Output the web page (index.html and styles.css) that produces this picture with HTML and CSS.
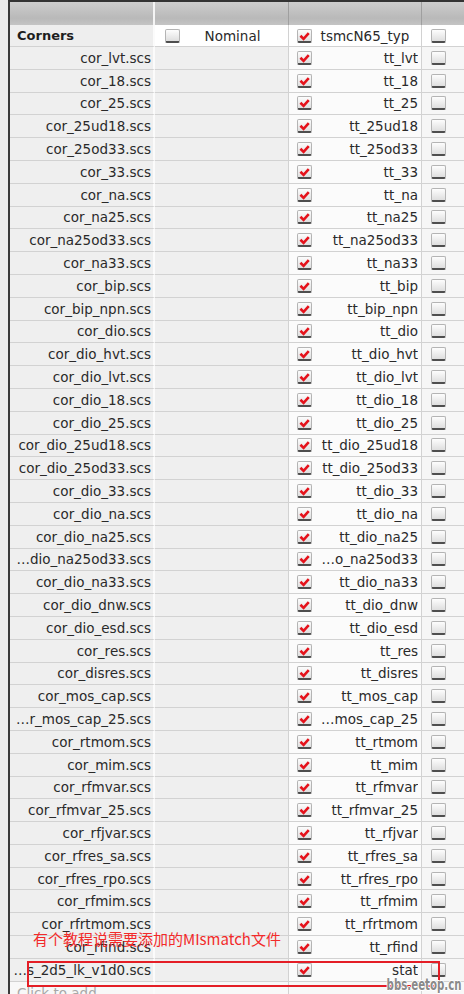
FILE: index.html
```html
<!DOCTYPE html>
<html>
<head>
<meta charset="utf-8">
<link rel="stylesheet" href="styles.css">
</head>
<body>
<div class="frame">
  <div class="table">
    <div class="row hdr">
      <div class="c c1"></div><div class="c c2"></div><div class="c c3"></div><div class="c c4"></div>
    </div>
    <div class="row top">
      <div class="c c1"><span class="title">Corners</span></div>
      <div class="c c2"><span class="cb"></span><span class="lbl center">Nominal</span></div>
      <div class="c c3"><span class="cb on"><svg viewBox="0 0 14 13"><path d="M2.6 6.2 L6 9.6 L11.6 3.4"/></svg></span><span class="lbl center">tsmcN65_typ</span></div>
      <div class="c c4"><span class="cb"></span></div>
    </div>
    <div class="row"><div class="c c1">cor_lvt.scs</div><div class="c c2"></div><div class="c c3"><span class="cb on"><svg viewBox="0 0 14 13"><path d="M2.6 6.2 L6 9.6 L11.6 3.4"/></svg></span><span class="lbl">tt_lvt</span></div><div class="c c4"><span class="cb"></span></div></div>
    <div class="row"><div class="c c1">cor_18.scs</div><div class="c c2"></div><div class="c c3"><span class="cb on"><svg viewBox="0 0 14 13"><path d="M2.6 6.2 L6 9.6 L11.6 3.4"/></svg></span><span class="lbl">tt_18</span></div><div class="c c4"><span class="cb"></span></div></div>
    <div class="row"><div class="c c1">cor_25.scs</div><div class="c c2"></div><div class="c c3"><span class="cb on"><svg viewBox="0 0 14 13"><path d="M2.6 6.2 L6 9.6 L11.6 3.4"/></svg></span><span class="lbl">tt_25</span></div><div class="c c4"><span class="cb"></span></div></div>
    <div class="row"><div class="c c1">cor_25ud18.scs</div><div class="c c2"></div><div class="c c3"><span class="cb on"><svg viewBox="0 0 14 13"><path d="M2.6 6.2 L6 9.6 L11.6 3.4"/></svg></span><span class="lbl">tt_25ud18</span></div><div class="c c4"><span class="cb"></span></div></div>
    <div class="row"><div class="c c1">cor_25od33.scs</div><div class="c c2"></div><div class="c c3"><span class="cb on"><svg viewBox="0 0 14 13"><path d="M2.6 6.2 L6 9.6 L11.6 3.4"/></svg></span><span class="lbl">tt_25od33</span></div><div class="c c4"><span class="cb"></span></div></div>
    <div class="row"><div class="c c1">cor_33.scs</div><div class="c c2"></div><div class="c c3"><span class="cb on"><svg viewBox="0 0 14 13"><path d="M2.6 6.2 L6 9.6 L11.6 3.4"/></svg></span><span class="lbl">tt_33</span></div><div class="c c4"><span class="cb"></span></div></div>
    <div class="row"><div class="c c1">cor_na.scs</div><div class="c c2"></div><div class="c c3"><span class="cb on"><svg viewBox="0 0 14 13"><path d="M2.6 6.2 L6 9.6 L11.6 3.4"/></svg></span><span class="lbl">tt_na</span></div><div class="c c4"><span class="cb"></span></div></div>
    <div class="row"><div class="c c1">cor_na25.scs</div><div class="c c2"></div><div class="c c3"><span class="cb on"><svg viewBox="0 0 14 13"><path d="M2.6 6.2 L6 9.6 L11.6 3.4"/></svg></span><span class="lbl">tt_na25</span></div><div class="c c4"><span class="cb"></span></div></div>
    <div class="row"><div class="c c1">cor_na25od33.scs</div><div class="c c2"></div><div class="c c3"><span class="cb on"><svg viewBox="0 0 14 13"><path d="M2.6 6.2 L6 9.6 L11.6 3.4"/></svg></span><span class="lbl">tt_na25od33</span></div><div class="c c4"><span class="cb"></span></div></div>
    <div class="row"><div class="c c1">cor_na33.scs</div><div class="c c2"></div><div class="c c3"><span class="cb on"><svg viewBox="0 0 14 13"><path d="M2.6 6.2 L6 9.6 L11.6 3.4"/></svg></span><span class="lbl">tt_na33</span></div><div class="c c4"><span class="cb"></span></div></div>
    <div class="row"><div class="c c1">cor_bip.scs</div><div class="c c2"></div><div class="c c3"><span class="cb on"><svg viewBox="0 0 14 13"><path d="M2.6 6.2 L6 9.6 L11.6 3.4"/></svg></span><span class="lbl">tt_bip</span></div><div class="c c4"><span class="cb"></span></div></div>
    <div class="row"><div class="c c1">cor_bip_npn.scs</div><div class="c c2"></div><div class="c c3"><span class="cb on"><svg viewBox="0 0 14 13"><path d="M2.6 6.2 L6 9.6 L11.6 3.4"/></svg></span><span class="lbl">tt_bip_npn</span></div><div class="c c4"><span class="cb"></span></div></div>
    <div class="row"><div class="c c1">cor_dio.scs</div><div class="c c2"></div><div class="c c3"><span class="cb on"><svg viewBox="0 0 14 13"><path d="M2.6 6.2 L6 9.6 L11.6 3.4"/></svg></span><span class="lbl">tt_dio</span></div><div class="c c4"><span class="cb"></span></div></div>
    <div class="row"><div class="c c1">cor_dio_hvt.scs</div><div class="c c2"></div><div class="c c3"><span class="cb on"><svg viewBox="0 0 14 13"><path d="M2.6 6.2 L6 9.6 L11.6 3.4"/></svg></span><span class="lbl">tt_dio_hvt</span></div><div class="c c4"><span class="cb"></span></div></div>
    <div class="row"><div class="c c1">cor_dio_lvt.scs</div><div class="c c2"></div><div class="c c3"><span class="cb on"><svg viewBox="0 0 14 13"><path d="M2.6 6.2 L6 9.6 L11.6 3.4"/></svg></span><span class="lbl">tt_dio_lvt</span></div><div class="c c4"><span class="cb"></span></div></div>
    <div class="row"><div class="c c1">cor_dio_18.scs</div><div class="c c2"></div><div class="c c3"><span class="cb on"><svg viewBox="0 0 14 13"><path d="M2.6 6.2 L6 9.6 L11.6 3.4"/></svg></span><span class="lbl">tt_dio_18</span></div><div class="c c4"><span class="cb"></span></div></div>
    <div class="row"><div class="c c1">cor_dio_25.scs</div><div class="c c2"></div><div class="c c3"><span class="cb on"><svg viewBox="0 0 14 13"><path d="M2.6 6.2 L6 9.6 L11.6 3.4"/></svg></span><span class="lbl">tt_dio_25</span></div><div class="c c4"><span class="cb"></span></div></div>
    <div class="row"><div class="c c1">cor_dio_25ud18.scs</div><div class="c c2"></div><div class="c c3"><span class="cb on"><svg viewBox="0 0 14 13"><path d="M2.6 6.2 L6 9.6 L11.6 3.4"/></svg></span><span class="lbl">tt_dio_25ud18</span></div><div class="c c4"><span class="cb"></span></div></div>
    <div class="row"><div class="c c1">cor_dio_25od33.scs</div><div class="c c2"></div><div class="c c3"><span class="cb on"><svg viewBox="0 0 14 13"><path d="M2.6 6.2 L6 9.6 L11.6 3.4"/></svg></span><span class="lbl">tt_dio_25od33</span></div><div class="c c4"><span class="cb"></span></div></div>
    <div class="row"><div class="c c1">cor_dio_33.scs</div><div class="c c2"></div><div class="c c3"><span class="cb on"><svg viewBox="0 0 14 13"><path d="M2.6 6.2 L6 9.6 L11.6 3.4"/></svg></span><span class="lbl">tt_dio_33</span></div><div class="c c4"><span class="cb"></span></div></div>
    <div class="row"><div class="c c1">cor_dio_na.scs</div><div class="c c2"></div><div class="c c3"><span class="cb on"><svg viewBox="0 0 14 13"><path d="M2.6 6.2 L6 9.6 L11.6 3.4"/></svg></span><span class="lbl">tt_dio_na</span></div><div class="c c4"><span class="cb"></span></div></div>
    <div class="row"><div class="c c1">cor_dio_na25.scs</div><div class="c c2"></div><div class="c c3"><span class="cb on"><svg viewBox="0 0 14 13"><path d="M2.6 6.2 L6 9.6 L11.6 3.4"/></svg></span><span class="lbl">tt_dio_na25</span></div><div class="c c4"><span class="cb"></span></div></div>
    <div class="row"><div class="c c1">…dio_na25od33.scs</div><div class="c c2"></div><div class="c c3"><span class="cb on"><svg viewBox="0 0 14 13"><path d="M2.6 6.2 L6 9.6 L11.6 3.4"/></svg></span><span class="lbl">…o_na25od33</span></div><div class="c c4"><span class="cb"></span></div></div>
    <div class="row"><div class="c c1">cor_dio_na33.scs</div><div class="c c2"></div><div class="c c3"><span class="cb on"><svg viewBox="0 0 14 13"><path d="M2.6 6.2 L6 9.6 L11.6 3.4"/></svg></span><span class="lbl">tt_dio_na33</span></div><div class="c c4"><span class="cb"></span></div></div>
    <div class="row"><div class="c c1">cor_dio_dnw.scs</div><div class="c c2"></div><div class="c c3"><span class="cb on"><svg viewBox="0 0 14 13"><path d="M2.6 6.2 L6 9.6 L11.6 3.4"/></svg></span><span class="lbl">tt_dio_dnw</span></div><div class="c c4"><span class="cb"></span></div></div>
    <div class="row"><div class="c c1">cor_dio_esd.scs</div><div class="c c2"></div><div class="c c3"><span class="cb on"><svg viewBox="0 0 14 13"><path d="M2.6 6.2 L6 9.6 L11.6 3.4"/></svg></span><span class="lbl">tt_dio_esd</span></div><div class="c c4"><span class="cb"></span></div></div>
    <div class="row"><div class="c c1">cor_res.scs</div><div class="c c2"></div><div class="c c3"><span class="cb on"><svg viewBox="0 0 14 13"><path d="M2.6 6.2 L6 9.6 L11.6 3.4"/></svg></span><span class="lbl">tt_res</span></div><div class="c c4"><span class="cb"></span></div></div>
    <div class="row"><div class="c c1">cor_disres.scs</div><div class="c c2"></div><div class="c c3"><span class="cb on"><svg viewBox="0 0 14 13"><path d="M2.6 6.2 L6 9.6 L11.6 3.4"/></svg></span><span class="lbl">tt_disres</span></div><div class="c c4"><span class="cb"></span></div></div>
    <div class="row"><div class="c c1">cor_mos_cap.scs</div><div class="c c2"></div><div class="c c3"><span class="cb on"><svg viewBox="0 0 14 13"><path d="M2.6 6.2 L6 9.6 L11.6 3.4"/></svg></span><span class="lbl">tt_mos_cap</span></div><div class="c c4"><span class="cb"></span></div></div>
    <div class="row"><div class="c c1">…r_mos_cap_25.scs</div><div class="c c2"></div><div class="c c3"><span class="cb on"><svg viewBox="0 0 14 13"><path d="M2.6 6.2 L6 9.6 L11.6 3.4"/></svg></span><span class="lbl">…mos_cap_25</span></div><div class="c c4"><span class="cb"></span></div></div>
    <div class="row"><div class="c c1">cor_rtmom.scs</div><div class="c c2"></div><div class="c c3"><span class="cb on"><svg viewBox="0 0 14 13"><path d="M2.6 6.2 L6 9.6 L11.6 3.4"/></svg></span><span class="lbl">tt_rtmom</span></div><div class="c c4"><span class="cb"></span></div></div>
    <div class="row"><div class="c c1">cor_mim.scs</div><div class="c c2"></div><div class="c c3"><span class="cb on"><svg viewBox="0 0 14 13"><path d="M2.6 6.2 L6 9.6 L11.6 3.4"/></svg></span><span class="lbl">tt_mim</span></div><div class="c c4"><span class="cb"></span></div></div>
    <div class="row"><div class="c c1">cor_rfmvar.scs</div><div class="c c2"></div><div class="c c3"><span class="cb on"><svg viewBox="0 0 14 13"><path d="M2.6 6.2 L6 9.6 L11.6 3.4"/></svg></span><span class="lbl">tt_rfmvar</span></div><div class="c c4"><span class="cb"></span></div></div>
    <div class="row"><div class="c c1">cor_rfmvar_25.scs</div><div class="c c2"></div><div class="c c3"><span class="cb on"><svg viewBox="0 0 14 13"><path d="M2.6 6.2 L6 9.6 L11.6 3.4"/></svg></span><span class="lbl">tt_rfmvar_25</span></div><div class="c c4"><span class="cb"></span></div></div>
    <div class="row"><div class="c c1">cor_rfjvar.scs</div><div class="c c2"></div><div class="c c3"><span class="cb on"><svg viewBox="0 0 14 13"><path d="M2.6 6.2 L6 9.6 L11.6 3.4"/></svg></span><span class="lbl">tt_rfjvar</span></div><div class="c c4"><span class="cb"></span></div></div>
    <div class="row"><div class="c c1">cor_rfres_sa.scs</div><div class="c c2"></div><div class="c c3"><span class="cb on"><svg viewBox="0 0 14 13"><path d="M2.6 6.2 L6 9.6 L11.6 3.4"/></svg></span><span class="lbl">tt_rfres_sa</span></div><div class="c c4"><span class="cb"></span></div></div>
    <div class="row"><div class="c c1">cor_rfres_rpo.scs</div><div class="c c2"></div><div class="c c3"><span class="cb on"><svg viewBox="0 0 14 13"><path d="M2.6 6.2 L6 9.6 L11.6 3.4"/></svg></span><span class="lbl">tt_rfres_rpo</span></div><div class="c c4"><span class="cb"></span></div></div>
    <div class="row"><div class="c c1">cor_rfmim.scs</div><div class="c c2"></div><div class="c c3"><span class="cb on"><svg viewBox="0 0 14 13"><path d="M2.6 6.2 L6 9.6 L11.6 3.4"/></svg></span><span class="lbl">tt_rfmim</span></div><div class="c c4"><span class="cb"></span></div></div>
    <div class="row"><div class="c c1">cor_rfrtmom.scs</div><div class="c c2"></div><div class="c c3"><span class="cb on"><svg viewBox="0 0 14 13"><path d="M2.6 6.2 L6 9.6 L11.6 3.4"/></svg></span><span class="lbl">tt_rfrtmom</span></div><div class="c c4"><span class="cb"></span></div></div>
    <div class="row"><div class="c c1">cor_rfind.scs</div><div class="c c2"></div><div class="c c3"><span class="cb on"><svg viewBox="0 0 14 13"><path d="M2.6 6.2 L6 9.6 L11.6 3.4"/></svg></span><span class="lbl">tt_rfind</span></div><div class="c c4"><span class="cb"></span></div></div>
    <div class="row"><div class="c c1">…s_2d5_lk_v1d0.scs</div><div class="c c2"></div><div class="c c3"><span class="cb on"><svg viewBox="0 0 14 13"><path d="M2.6 6.2 L6 9.6 L11.6 3.4"/></svg></span><span class="lbl">stat</span></div><div class="c c4"><span class="cb"></span></div></div>
    <div class="row add"><div class="c c1 hint">Click to add</div><div class="c c2"></div><div class="c c3"></div><div class="c c4"></div></div>
  </div>
  <div class="note">有个教程说需要添加的MIsmatch文件</div>
  <div class="mark-box"></div>
  <div class="watermark">bbs.eetop.cn</div>
</div>
</body>
</html>
```

FILE: styles.css
```css
html, body {
  margin: 0;
  padding: 0;
}
body {
  background: #ececec;
  font-family: "DejaVu Sans", "Noto Sans CJK SC", sans-serif;
  font-size: 13.5px;
  color: #2a2a2a;
  width: 464px;
  height: 994px;
  overflow: hidden;
}
.frame {
  position: relative;
  height: 994px;
  overflow: hidden;
}
.table {
  margin-left: 8px;
  border-left: 2px solid #3a3a3a;
  border-top: 2px solid #333;
}
.row {
  display: grid;
  grid-template-columns: 145px 134px 133px 1fr;
  height: 22.8px;
}
.c {
  display: flex;
  align-items: center;
  justify-content: flex-end;
  box-sizing: border-box;
  border-bottom: 1px solid #d2d2d2;
  border-right: 1px solid #d2d2d2;
  padding-right: 3px;
  white-space: nowrap;
  overflow: hidden;
  min-width: 0;
}
.c1 {
  background: #efefef;
  border-right: 2px solid #fbfbfb;
  padding-right: 2px;
}
.c2 { background: #efefef; }
.c3 { background: #fbfbfb; padding-left: 8px; justify-content: flex-start; }
.c4 { background: #f6f6f6; padding-left: 9px; justify-content: flex-start; border-right: none; }

.hdr {
  height: 23px;
  background: linear-gradient(#cdcdcd, #b9b9b9 70%, #c4c4c4);
}
.hdr .c {
  background: transparent;
  border-bottom: none;
  border-right: 1px solid #9f9f9f;
}
.hdr .c1 { border-right: 2px solid #f4f4f4; }
.hdr .c4 { border-right: none; }

.top { height: 22px; }
.top .c1 {
  justify-content: flex-start;
  padding-left: 7px;
  background: #eeeeee;
}
.top .c2 { background: #fff; padding-left: 10px; justify-content: flex-start; }
.top .c3 { background: #fff; }
.top .c4 { background: #fff; }
.title { font-weight: bold; font-size: 13px; color: #1e1e1e; }

.lbl {
  flex: 1;
  text-align: right;
  overflow: hidden;
}
.lbl.center { text-align: center; }

.cb {
  flex: none;
  display: inline-block;
  box-sizing: border-box;
  width: 15px;
  height: 14px;
  border: 1px solid #b4b4b4;
  border-bottom: 2px solid #4e4e4e;
  border-radius: 2px;
  background: linear-gradient(#fdfdfd, #dedede);
  position: relative;
}
.cb svg {
  position: absolute;
  left: 0;
  top: 0;
  width: 13px;
  height: 12px;
}
.cb svg path {
  fill: none;
  stroke: #e5121b;
  stroke-width: 2.8;
  stroke-linecap: butt;
  stroke-linejoin: miter;
}

.add { height: 22px; }
.add .c { background: #f8f8f8; border-bottom: none; }
.hint { justify-content: flex-start; padding-left: 7px; color: #a8a8a8; }

.note {
  position: absolute;
  left: 33px;
  top: 929px;
  font-family: "Noto Sans CJK SC", sans-serif;
  font-size: 15px;
  line-height: 20px;
  color: #f22a2a;
  white-space: nowrap;
}
.mark-box {
  position: absolute;
  left: 27px;
  top: 961px;
  width: 413px;
  height: 26px;
  box-sizing: border-box;
  border: 2px solid #e41e26;
}
.watermark {
  position: absolute;
  right: 2px;
  top: 975px;
  font-family: "DejaVu Sans Condensed", "DejaVu Sans", sans-serif;
  font-weight: bold;
  font-size: 16px;
  line-height: 19px;
  color: #8a8a8a;
  white-space: nowrap;
  transform: scaleX(0.71);
  transform-origin: right center;
  text-shadow: 1px 0 0 #fff, -1px 0 0 #fff, 0 1px 0 #fff, 0 -1px 0 #fff;
}
```
